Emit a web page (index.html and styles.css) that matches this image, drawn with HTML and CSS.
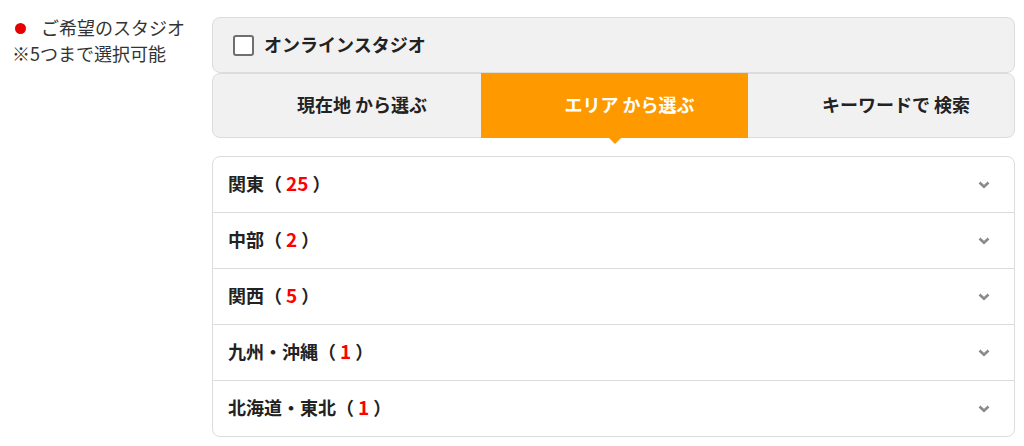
FILE: index.html
```html
<!DOCTYPE html>
<html lang="ja">
<head>
<meta charset="utf-8">
<title>スタジオ選択</title>
<link rel="stylesheet" href="styles.css">
</head>
<body>
<div class="page">
  <div class="label-col">
    <div class="label-title"><span class="dot"></span>ご希望のスタジオ</div>
    <div class="label-note">※5つまで選択可能</div>
  </div>
  <div class="main-col">
    <label class="online-box">
      <span class="checkbox"></span>
      <span class="online-text">オンラインスタジオ</span>
    </label>
    <div class="tabs">
      <div class="tab">現在地 から選ぶ</div>
      <div class="tab active">エリア から選ぶ</div>
      <div class="tab">キーワードで 検索</div>
    </div>
    <div class="accordion">
      <div class="acc-row"><span class="acc-label">関東（<span class="num">25</span>）</span><svg class="chev" width="12" height="8" viewBox="0 0 12 8"><polyline points="1.5,1.5 6,5.8 10.5,1.5" fill="none" stroke="#8a8a8a" stroke-width="2.6"/></svg></div>
      <div class="acc-row"><span class="acc-label">中部（<span class="num">2</span>）</span><svg class="chev" width="12" height="8" viewBox="0 0 12 8"><polyline points="1.5,1.5 6,5.8 10.5,1.5" fill="none" stroke="#8a8a8a" stroke-width="2.6"/></svg></div>
      <div class="acc-row"><span class="acc-label">関西（<span class="num">5</span>）</span><svg class="chev" width="12" height="8" viewBox="0 0 12 8"><polyline points="1.5,1.5 6,5.8 10.5,1.5" fill="none" stroke="#8a8a8a" stroke-width="2.6"/></svg></div>
      <div class="acc-row"><span class="acc-label">九州・沖縄（<span class="num">1</span>）</span><svg class="chev" width="12" height="8" viewBox="0 0 12 8"><polyline points="1.5,1.5 6,5.8 10.5,1.5" fill="none" stroke="#8a8a8a" stroke-width="2.6"/></svg></div>
      <div class="acc-row"><span class="acc-label">北海道・東北（<span class="num">1</span>）</span><svg class="chev" width="12" height="8" viewBox="0 0 12 8"><polyline points="1.5,1.5 6,5.8 10.5,1.5" fill="none" stroke="#8a8a8a" stroke-width="2.6"/></svg></div>
    </div>
  </div>
</div>
</body>
</html>
```

FILE: styles.css
```css
html, body {
  margin: 0;
  padding: 0;
  background: #ffffff;
}
body {
  font-family: "Noto Sans CJK JP", "Noto Sans", sans-serif;
  color: #222;
}
.page {
  display: grid;
  grid-template-columns: 200px 803px;
  padding: 17px 0 0 12px;
}
.label-col {
  margin-top: -3px;
  font-size: 18px;
  line-height: 26px;
  color: #333;
}
.label-title {
  display: flex;
  align-items: center;
}
.dot {
  display: inline-block;
  width: 11px;
  height: 11px;
  border-radius: 50%;
  background: #e60000;
  margin: 3px 15px 0 3px;
}
.main-col {
  display: flex;
  flex-direction: column;
}
.online-box {
  display: flex;
  align-items: center;
  box-sizing: border-box;
  height: 56px;
  background: #f1f1f1;
  border: 1px solid #dcdcdc;
  border-radius: 8px;
  padding-left: 20px;
}
.checkbox {
  width: 17px;
  height: 17px;
  border: 2px solid #6f6f6f;
  border-radius: 3px;
  background: #fff;
  margin-right: 10px;
}
.online-text {
  font-size: 18px;
  font-weight: 700;
  color: #222;
  padding-bottom: 3px;
}
.tabs {
  display: grid;
  grid-template-columns: 268px 267px 1fr;
  height: 65px;
  box-sizing: border-box;
  background: #f1f1f1;
  border: 1px solid #dcdcdc;
  border-radius: 8px;
}
.tab {
  display: flex;
  align-items: center;
  justify-content: center;
  font-size: 18px;
  font-weight: 700;
  color: #222;
  position: relative;
  padding: 0 0 4px 30px;
}
.tab.active {
  background: #ff9900;
  color: #fff;
  margin: -1px 0;
}
.tab.active::after {
  content: "";
  position: absolute;
  left: 50%;
  bottom: -6px;
  margin-left: -6px;
  border-left: 6px solid transparent;
  border-right: 6px solid transparent;
  border-top: 6px solid #ff9900;
}
.accordion {
  margin-top: 18px;
  border: 1px solid #dcdcdc;
  border-radius: 8px;
}
.acc-row {
  display: flex;
  align-items: center;
  justify-content: space-between;
  height: 55px;
  padding: 0 24px 0 15px;
  border-top: 1px solid #dcdcdc;
}
.acc-row:first-child {
  border-top: none;
}
.acc-label {
  font-size: 18px;
  font-weight: 700;
  color: #222;
  padding-bottom: 4px;
}
.num {
  color: #ff0000;
  padding: 0 4px;
  font-size: 19px;
}
.chev {
  display: block;
}
```
